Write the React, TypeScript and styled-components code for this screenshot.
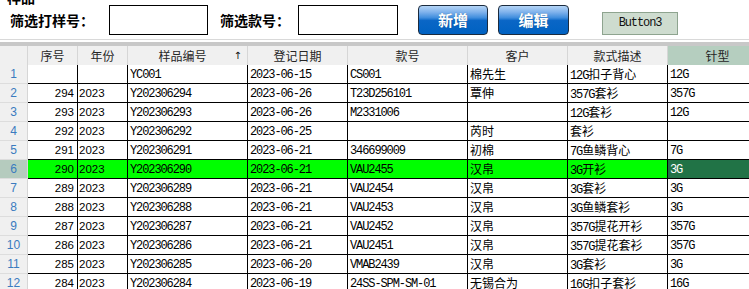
import React from "react";
import styled, { createGlobalStyle } from "styled-components";

const GlobalStyle = createGlobalStyle`
  html, body {
    margin: 0;
    padding: 0;
    background: #ffffff;
    overflow: hidden;
  }
  body {
    font-family: "Noto Sans CJK SC", "Liberation Sans", sans-serif;
  }
`;

const COLS = "28px 50px 50px 120px 100px 120px 100px 100px 100px";

const Page = styled.div`
  width: 749px;
  height: 289px;
  overflow: hidden;
`;

const TitleStrip = styled.div`
  height: 5px;
  overflow: hidden;
`;

const Title = styled.div`
  margin: -11px 0 0 7px;
  font: bold 14px/16px "Noto Sans CJK SC", sans-serif;
  color: #000;
`;

const Toolbar = styled.div`
  display: flex;
  align-items: flex-start;
  height: 34px;
  padding-left: 10px;
`;

const Label = styled.div<{ $w: number; $ml?: number }>`
  width: ${(p) => p.$w}px;
  margin-left: ${(p) => p.$ml || 0}px;
  height: 30px;
  font: bold 14px/30px "Noto Sans CJK SC", sans-serif;
  color: #000;
  white-space: nowrap;
`;

const Field = styled.input<{ $w: number }>`
  box-sizing: border-box;
  width: ${(p) => p.$w}px;
  height: 30px;
  margin: 0;
  border: 1px solid #000;
  background: #fff;
  outline: none;
`;

const BlueButton = styled.button<{ $ml: number; $w: number }>`
  box-sizing: border-box;
  margin: 0 0 0 ${(p) => p.$ml}px;
  width: ${(p) => p.$w}px;
  height: 30px;
  padding: 0;
  border: 1px solid #1b2b3e;
  border-radius: 4px;
  background: linear-gradient(
    to bottom,
    #b4d4f6 0%,
    #7fb2ec 22%,
    #3f8ddd 42%,
    #0a66c6 52%,
    #0062c2 100%
  );
  color: #fff;
  font: bold 15px/28px "Noto Sans CJK SC", sans-serif;
  text-shadow: 0 0 1px rgba(0, 0, 0, 0.35);
`;

const PlainButton = styled.button<{ $ml: number }>`
  box-sizing: border-box;
  margin: 7px 0 0 ${(p) => p.$ml}px;
  width: 76px;
  height: 23px;
  padding: 0;
  border: 1px solid #8ea48f;
  background: #cedccf;
  color: #111;
  font: 12px/21px "Liberation Mono", monospace;
  letter-spacing: -1.1px;
`;

const Divider = styled.div`
  height: 2px;
  border-top: 1px solid #d9d9d9;
  border-bottom: 4px solid #c8c8c8;
`;

const Grid = styled.div`
  display: flex;
  flex-direction: column;
  width: 768px;
`;

const HeadRow = styled.div`
  display: grid;
  grid-template-columns: ${COLS};
  height: 19px;
`;

const HeadCell = styled.div<{ $active?: boolean; $sorted?: boolean }>`
  position: relative;
  box-sizing: border-box;
  border-right: 1px solid #d6d6d6;
  background: ${(p) => (p.$active ? "#b5cebf" : "#f0f0f0")};
  color: #262626;
  font: 12px/19px "Noto Sans CJK SC", sans-serif;
  text-align: center;
  padding-right: ${(p) => (p.$sorted ? 10 : 0)}px;
  white-space: nowrap;
`;

const SortMark = styled.span`
  position: absolute;
  right: 5px;
  top: 0;
  font: 10px/19px "DejaVu Sans", sans-serif;
  color: #111;
`;

const Row = styled.div`
  display: grid;
  grid-template-columns: ${COLS};
  height: 19px;
`;

const RowHead = styled.div<{ $current?: boolean }>`
  box-sizing: border-box;
  border-right: 1px solid #d6d6d6;
  border-bottom: 1px solid #dddddd;
  background: ${(p) => (p.$current ? "#b5cbbe" : "#f0f0f0")};
  color: #3a7bbf;
  font: 12px/18px "Liberation Sans", sans-serif;
  text-align: center;
`;

const Cell = styled.div<{ $hl?: boolean; $sel?: boolean; $right?: boolean; $num?: boolean }>`
  box-sizing: border-box;
  border-right: 1px solid #000;
  border-bottom: 1px solid #000;
  background: ${(p) => (p.$sel ? "#217346" : p.$hl ? "#00ff00" : "#ffffff")};
  color: ${(p) => (p.$sel ? "#ffffff" : "#000000")};
  text-align: ${(p) => (p.$right ? "right" : "left")};
  padding: 0 ${(p) => (p.$right ? 3 : 0)}px 0 ${(p) => (p.$num ? 1 : 2)}px;
  font: ${(p) => (p.$num ? '11.5px/18px "Liberation Sans", sans-serif' : "12px/18px sans-serif")};
  white-space: nowrap;
  overflow: hidden;
`;

const Run = styled.span<{ $cjk: boolean }>`
  font-family: ${(p) => (p.$cjk ? '"Noto Sans CJK SC", sans-serif' : '"Liberation Mono", monospace')};
  font-size: 12px;
  letter-spacing: ${(p) => (p.$cjk ? 0 : -1.1)}px;
`;

const CJK = /[\u3000-\u9fff\uff00-\uffef]/;

const Mixed = ({ text }: { text: string }) => {
  const parts = text.match(/[\u3000-\u9fff\uff00-\uffef]+|[^\u3000-\u9fff\uff00-\uffef]+/g) || [];
  return (
    <>
      {parts.map((part, i) => (
        <Run key={i} $cjk={CJK.test(part)}>
          {part}
        </Run>
      ))}
    </>
  );
};

const headers = ["序号", "年份", "样品编号", "登记日期", "款号", "客户", "款式描述", "针型"];

type Sample = [string, string, string, string, string, string, string, string];

const rows: Sample[] = [
  ["", "", "YC001", "2023-06-15", "CS001", "棉先生", "12G扣子背心", "12G"],
  ["294", "2023", "Y202306294", "2023-06-26", "T23D256101", "覃伸", "357G套衫", "357G"],
  ["293", "2023", "Y202306293", "2023-06-26", "M2331006", "", "12G套衫", "12G"],
  ["292", "2023", "Y202306292", "2023-06-25", "", "芮时", "套衫", ""],
  ["291", "2023", "Y202306291", "2023-06-21", "346699009", "初棉", "7G鱼鳞背心", "7G"],
  ["290", "2023", "Y202306290", "2023-06-21", "VAU2455", "汉帛", "3G开衫", "3G"],
  ["289", "2023", "Y202306289", "2023-06-21", "VAU2454", "汉帛", "3G套衫", "3G"],
  ["288", "2023", "Y202306288", "2023-06-21", "VAU2453", "汉帛", "3G鱼鳞套衫", "3G"],
  ["287", "2023", "Y202306287", "2023-06-21", "VAU2452", "汉帛", "357G提花开衫", "357G"],
  ["286", "2023", "Y202306286", "2023-06-21", "VAU2451", "汉帛", "357G提花套衫", "357G"],
  ["285", "2023", "Y202306285", "2023-06-20", "VMAB2439", "汉帛", "3G套衫", "3G"],
  ["284", "2023", "Y202306284", "2023-06-19", "24SS-SPM-SM-01", "无锡合为", "16G扣子套衫", "16G"],
];

const CURRENT = 5;

export default function App() {
  return (
    <Page>
      <GlobalStyle />
      <TitleStrip>
        <Title>样品</Title>
      </TitleStrip>
      <Toolbar>
        <Label $w={99}>筛选打样号：</Label>
        <Field $w={99} />
        <Label $w={78} $ml={12}>
          筛选款号：
        </Label>
        <Field $w={100} />
        <BlueButton $ml={20} $w={70}>新增</BlueButton>
        <BlueButton $ml={10} $w={71}>编辑</BlueButton>
        <PlainButton $ml={33}>Button3</PlainButton>
      </Toolbar>
      <Divider />
      <Grid>
        <HeadRow>
          <HeadCell />
          {headers.map((h, i) => (
            <HeadCell key={h} $active={i === 7} $sorted={i === 2}>
              {h}
              {i === 2 && <SortMark>↑</SortMark>}
            </HeadCell>
          ))}
        </HeadRow>
        {rows.map((r, ri) => {
          const hl = ri === CURRENT;
          return (
            <Row key={ri}>
              <RowHead $current={hl}>{ri + 1}</RowHead>
              {r.map((v, ci) => (
                <Cell
                  key={ci}
                  $hl={hl}
                  $sel={hl && ci === 7}
                  $right={ci === 0}
                  $num={ci < 2}
                >
                  {ci < 2 ? v : <Mixed text={v} />}
                </Cell>
              ))}
            </Row>
          );
        })}
      </Grid>
    </Page>
  );
}
